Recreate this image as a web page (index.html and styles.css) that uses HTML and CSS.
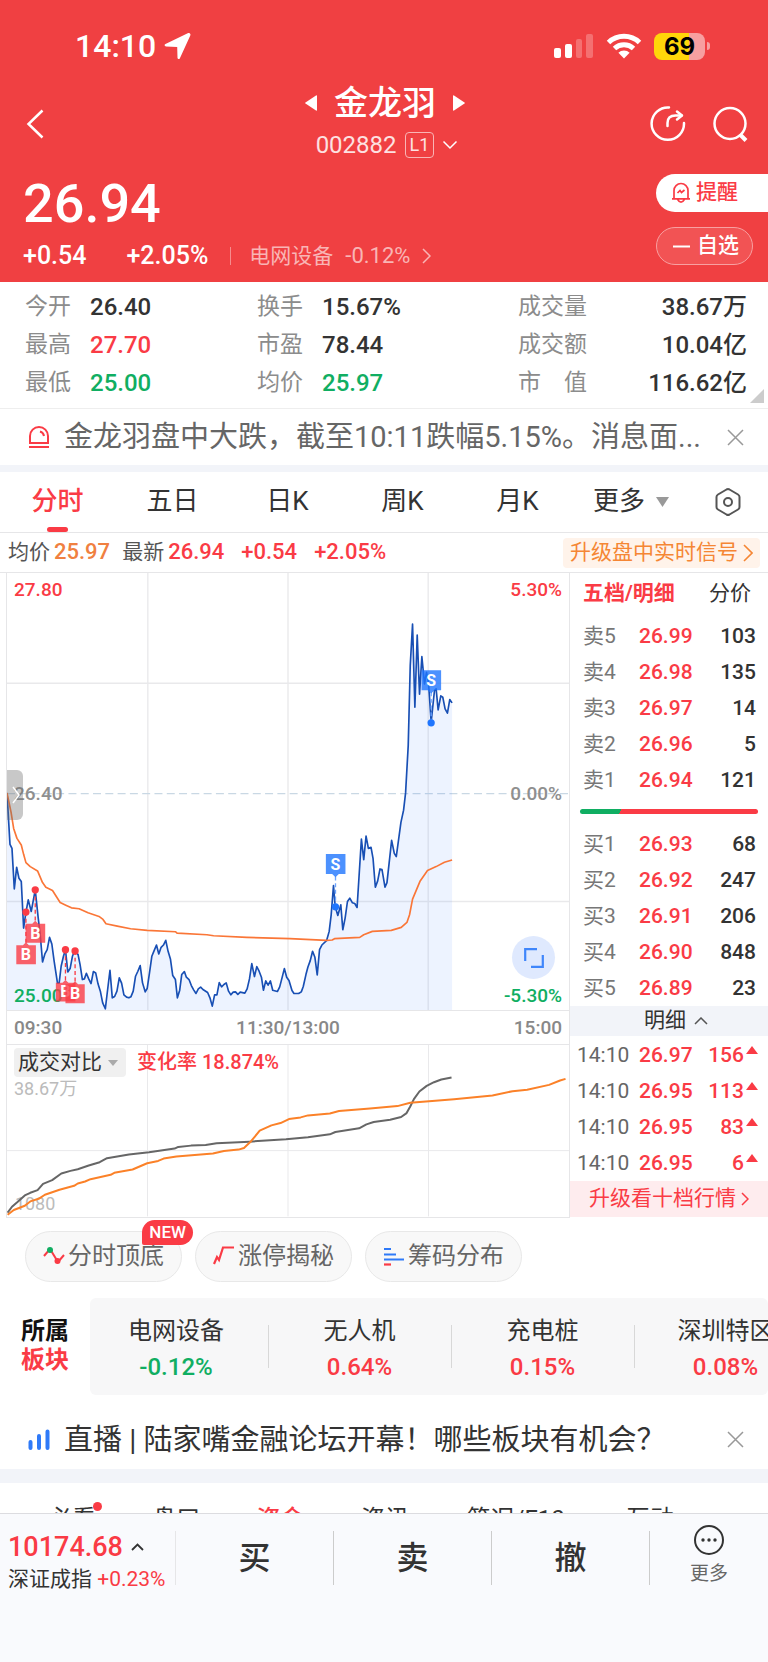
FILE: index.html
```html
<!DOCTYPE html>
<html lang="zh-CN">
<head>
<meta charset="utf-8">
<meta name="viewport" content="width=device-width, initial-scale=1">
<title>金龙羽 002882</title>
<link rel="stylesheet" href="styles.css">
</head>
<body>
<header class="header">
  <div class="status">
    <div class="status-time">14:10
      <svg width="27" height="28" viewBox="0 0 27 28"><path d="M25.6 1.2c.9.4 1.100 1.300.7 2.200L15.900 26.200c-.6 1.400-2.300 1.100-2.400-.4L13.200 14.900 2 14.500c-1.600-.1-1.900-1.800-.5-2.400L23.700 1.200c.7-.3 1.300-.3 1.900 0z" fill="#fff"/></svg>
    </div>
    <div class="status-icons">
      <svg width="40" height="26" viewBox="0 0 40 26" fill="#fff"><rect y="15" width="7" height="10" rx="2"/><rect x="11" y="11" width="7" height="14" rx="2"/><rect x="22" y="6" width="6" height="19" rx="2" opacity=".25"/><rect x="32" y="1" width="7" height="24" rx="2" opacity=".25"/></svg>
      <svg width="36" height="26" viewBox="0 0 36 26"><g fill="none" stroke="#fff" stroke-width="5"><path d="M2.500 9.500a22.500 22.500 0 0 1 31 0"/><path d="M8.500 15.500a14 14 0 0 1 19 0"/></g><path d="M18 25.500l-5.600-5.700a8 8 0 0 1 11.200 0z" fill="#fff"/></svg>
      <span class="battery"><span class="battery-level">69</span></span>
    </div>
  </div>
  <div class="nav">
    <button class="icon-btn nav-back" aria-label="返回"><svg width="18" height="30" viewBox="0 0 18 30"><path d="M16.500 1.500L2.500 15l14 13.500" fill="none" stroke="#fff" stroke-width="2.500"/></svg></button>
    <div class="nav-title">
      <div class="nav-name">
        <button class="icon-btn" aria-label="上一只"><svg width="12" height="16" viewBox="0 0 12 16"><path d="M12 1v14q0 1-1 .5L.5 8.600q-.8-.6 0-1.200L11 .5q1-.5 1 .5z" fill="#fff"/></svg></button>
        <h1>金龙羽</h1>
        <button class="icon-btn" aria-label="下一只"><svg width="12" height="16" viewBox="0 0 12 16"><path d="M0 1v14q0 1 1 .5l10.500-6.900q.8-.6 0-1.200L1 .5Q0 0 0 1z" fill="#fff"/></svg></button>
      </div>
      <div class="nav-code">002882 <span class="level">L1</span>
        <svg width="16" height="10" viewBox="0 0 16 10"><path d="M1.500 1.500L8 8l6.500-6.500" fill="none" stroke="#fff" stroke-width="1.500"/></svg>
      </div>
    </div>
    <div class="nav-actions">
      <button class="icon-btn" aria-label="分享"><svg width="36" height="36" viewBox="0 0 36 36" fill="none" stroke="#fff" stroke-width="2.500" stroke-linecap="round" stroke-linejoin="round"><path d="M19 1.500A16.200 16.200 0 1 0 34 17"/><path d="M17.500 20v-3c0-5 3-7.500 8-7.500h6"/><path d="M27 5.500l5 4-5 4"/></svg></button>
      <button class="icon-btn" aria-label="搜索"><svg width="36" height="36" viewBox="0 0 36 36" fill="none" stroke="#fff" stroke-width="2.500"><circle cx="18" cy="17.500" r="15.500"/><path d="M28 28.500l6 6" stroke-width="4"/></svg></button>
    </div>
  </div>
  <div class="quote">
    <div>
      <div class="quote-price">26.94</div>
      <div class="quote-row">
        <span class="quote-diff">+0.54</span><span class="quote-pct">+2.05%</span>
        <a class="quote-sector" href="#sectors"><span>电网设备</span><span class="quote-sector-pct">-0.12%</span>
          <svg width="9" height="16" viewBox="0 0 9 16"><path d="M1 1l7 7-7 7" fill="none" stroke="currentColor" stroke-width="1.500"/></svg></a>
      </div>
    </div>
    <div class="quote-actions">
      <button class="alert-btn"><svg width="20" height="22" viewBox="0 0 20 22" fill="none" stroke="#fa3b45" stroke-width="1.700"><path d="M1 16.800h18M3 16.500V8.500a7 7 0 0 1 14 0v8M6.500 17.200q3.500 6 7 0"/><path d="M6.500 11l2.500-2.500 1.500 2 3-2.500"/></svg>提醒</button>
      <button class="fav-btn"><svg width="17" height="3" viewBox="0 0 17 3"><path d="M0 1.500h17" stroke="#fff" stroke-width="2"/></svg>自选</button>
    </div>
  </div>
</header>
<main>
  <section class="stats">
    <div class="stat"><span>今开</span><b>26.40</b></div><div class="stat"><span>换手</span><b>15.67%</b></div><div class="stat stat-end"><span>成交量</span><b>38.67万</b></div>
    <div class="stat"><span>最高</span><b class="up">27.70</b></div><div class="stat"><span>市盈</span><b>78.44</b></div><div class="stat stat-end"><span>成交额</span><b>10.04亿</b></div>
    <div class="stat"><span>最低</span><b class="down">25.00</b></div><div class="stat"><span>均价</span><b class="down">25.97</b></div><div class="stat stat-end"><span>市　值</span><b>116.62亿</b></div>
  </section>
  <section class="notice news">
    <svg width="22" height="24" viewBox="0 0 22 24" fill="none" stroke="#fa3b45" stroke-width="2"><path d="M2 18V11a9 9 0 0 1 18 0v7zM1 22h20"/><path d="M12 6.500q3.500 1 4 4.500"/></svg>
    <p>金龙羽盘中大跌，截至10:11跌幅5.15%。消息面...</p>
    <button class="icon-btn" aria-label="关闭"><svg width="17" height="17" viewBox="0 0 17 17"><path d="M1 1l15 15M16 1L1 16" stroke="#999" stroke-width="1.500"/></svg></button>
  </section>
  <nav class="periods">
    <button class="period active">分时</button><button class="period">五日</button><button class="period">日K</button><button class="period">周K</button><button class="period">月K</button>
    <button class="period">更多<svg width="13" height="10" viewBox="0 0 13 10"><path d="M0 0h13L6.500 10z" fill="#999"/></svg></button>
    <button class="period" aria-label="设置"><svg width="26" height="28" viewBox="0 0 26 28" fill="none" stroke="#555" stroke-width="2" stroke-linejoin="round"><path d="M11.500 1.500q1.500-.8 3 0L23 6.500q1.500.9 1.500 2.500v10q0 1.600-1.500 2.500l-8.500 5q-1.500.8-3 0L3 21.500q-1.500-.9-1.500-2.500V9q0-1.600 1.500-2.500z"/><circle cx="13" cy="14" r="4"/></svg></button>
  </nav>
  <div class="summary">
    <span>均价</span><b class="avg">25.97</b><span class="summary-last">最新</span><b class="up">26.94</b><b class="up summary-change">+0.54</b><b class="up summary-change">+2.05%</b>
    <a class="signal" href="#signal">升级盘中实时信号<svg width="10" height="18" viewBox="0 0 10 18"><path d="M1 1l8 8-8 8" fill="none" stroke="currentColor" stroke-width="1.600"/></svg></a>
  </div>
  <section class="board">
    <div class="charts">
      <div class="price-chart">
        <svg class="plot" viewBox="18 21 1692 1317">
          <g stroke="#e9e9eb" stroke-width="4"><path d="M442 21v1317M864 21v1317M1286 21v1317M18 353h1692M18 1010h1692"/></g>
          <path d="M18 685h1692" stroke="#c9d8e4" stroke-width="4" stroke-dasharray="24 13"/>
          <path class="price-area" d="M18 683 27 838 33 850 40 972 47 907 54 940 61 950 68 1090 75 1042 82 1005 91 1040 103 975 112 1060 125 1192 139 1155 146 1118 153 1138 160 1190 170 1256 175 1256 181 1205 194 1155 201 1222 208 1212 222 1158 232 1170 245 1245 251 1243 257 1226 271 1257 278 1221 285 1225 299 1280 314 1333 328 1217 335 1300 349 1280 356 1240 363 1256 370 1291 385 1300 398 1280 405 1235 419 1203 434 1282 440 1272 454 1175 468 1141 475 1168 496 1127 510 1183 517 1233 525 1245 531 1300 544 1230 552 1221 558 1238 566 1245 587 1287 601 1268 622 1284 636 1325 643 1291 650 1291 657 1254 664 1267 678 1255 692 1291 706 1282 734 1286 748 1243 755 1197 763 1236 770 1206 784 1238 790 1277 797 1249 804 1262 811 1249 818 1277 832 1281 839 1267 853 1212 867 1248 882 1287 904 1282 924 1207 938 1160 945 1178 952 1231 959 1155 966 1141 980 1128 988 1100 1001 962 1014 1052 1023 1020 1029 1095 1043 1010 1050 1000 1072 1028 1085 822 1092 884 1099 813 1106 850 1114 847 1127 967 1141 912 1156 967 1176 826 1190 875 1204 772 1218 683 1232 300 1239 175 1246 425 1253 208 1260 386 1267 273 1275 355 1287 340 1295 470 1310 370 1316 433 1324 391 1337 430 1344 443 1351 402 1358 412V1338H18z"/>
          <polyline class="price-line" points="18,683 27,838 33,850 40,972 47,907 54,940 61,950 68,1090 75,1042 82,1005 91,1040 103,975 112,1060 118,1110 125,1192 132,1168 139,1155 146,1118 153,1138 160,1190 170,1256 175,1256 181,1205 188,1175 194,1155 201,1222 208,1212 215,1175 222,1158 232,1170 238,1200 245,1245 251,1243 257,1226 264,1243 271,1257 278,1221 285,1225 292,1258 299,1280 306,1315 314,1333 321,1275 328,1217 335,1300 342,1296 349,1280 356,1240 363,1256 370,1291 378,1298 385,1300 391,1297 398,1280 405,1235 412,1220 419,1203 426,1255 434,1282 440,1272 447,1225 454,1175 461,1158 468,1141 475,1168 482,1148 489,1141 496,1127 503,1160 510,1183 517,1233 525,1245 531,1300 538,1277 544,1230 552,1221 558,1238 566,1245 573,1263 580,1276 587,1287 594,1273 601,1268 608,1275 622,1284 629,1300 636,1325 643,1291 650,1291 657,1254 664,1267 671,1260 678,1255 685,1280 692,1291 699,1283 706,1282 713,1290 720,1283 734,1286 741,1273 748,1243 755,1197 763,1236 770,1206 777,1220 784,1238 790,1277 797,1249 804,1262 811,1249 818,1277 832,1281 839,1267 846,1240 853,1212 860,1238 867,1248 876,1278 882,1287 896,1287 904,1282 910,1266 918,1230 924,1207 931,1188 938,1160 945,1178 952,1231 959,1155 966,1141 980,1128 988,1100 994,1050 1001,962 1006,1025 1014,1052 1023,1020 1029,1095 1036,1060 1043,1010 1050,1000 1058,1014 1065,1016 1072,1028 1085,822 1092,884 1099,813 1106,850 1114,847 1120,880 1127,967 1134,948 1141,912 1147,914 1156,967 1162,953 1176,826 1184,865 1190,875 1204,772 1212,735 1218,683 1226,540 1232,300 1239,175 1246,425 1253,208 1260,386 1267,273 1275,355 1281,320 1287,350 1295,470 1305,375 1310,370 1316,433 1324,391 1330,395 1337,430 1344,443 1351,402 1358,412"/>
          <polyline class="avg-line" points="18,683 30,740 38,790 48,820 61,840 68,868 75,893 88,905 110,918 125,953 135,967 155,977 178,1013 195,1021 212,1029 235,1032 262,1044 295,1055 307,1064 316,1077 350,1084 390,1092 440,1097 525,1101 530,1105 620,1110 640,1113 740,1118 870,1122 980,1127 997,1126 1004,1122 1080,1118 1092,1110 1118,1100 1175,1097 1205,1088 1222,1073 1230,1050 1239,1003 1262,948 1284,917 1310,905 1335,892 1358,885"/>
        </svg>
        <span class="tag tag-tl up">27.80</span><span class="tag tag-tr up">5.30%</span>
        <span class="tag tag-ml">26.40</span><span class="tag tag-mr">0.00%</span>
        <span class="tag tag-bl down">25.00</span><span class="tag tag-br down">-5.30%</span>
        <svg class="plot markers" viewBox="18 21 1692 1317">
          <g class="buy"><path class="stem" d="M75 1042v100M103 975v100M194 1155v100M223 1159v100"/>
            <path class="flag" d="M46 1142h20l9-9 9 9h21v57H46zM74 1077h20l9-9 9 9h21v57H74zM165 1255h20l9-9 9 9h21v56H165z"/>
            <text class="letter" x="194" y="1299">B</text>
            <path class="flag" d="M194 1259h20l9-9 9 9h20v57H194z"/>
            <circle cx="75" cy="1042" r="11"/><circle cx="103" cy="975" r="11"/><circle cx="194" cy="1155" r="11"/><circle cx="223" cy="1159" r="11"/>
            <g class="letter"><text x="75" y="1187">B</text><text x="103" y="1122">B</text><text x="223" y="1304">B</text></g></g>
          <g class="sell"><path class="stem" d="M1007 935v90M1295 380v90"/>
            <path class="flag" d="M978 867h59v60h-20l-10 10-10-10h-19zM1266 314h59v60h-20l-10 10-10-10h-19z"/>
            <circle cx="1007" cy="1026" r="11"/><circle cx="1295" cy="472" r="11"/>
            <g class="letter"><text x="1007" y="914">S</text><text x="1295" y="361">S</text></g></g>
        </svg>
        <button class="drawer" aria-label="展开"><svg width="8" height="18" viewBox="0 0 8 18"><path d="M1 1l6 8-6 8" fill="none" stroke="#fff" stroke-width="1.500"/></svg></button>
        <button class="expand" aria-label="全屏"><svg width="20" height="20" viewBox="0 0 20 20"><path d="M1.200 13V1.200H13M7 18.800h11.800V7" fill="none" stroke="#3f86fb" stroke-width="2.200"/></svg></button>
      </div>
      <div class="axis"><span>09:30</span><span>11:30/13:00</span><span>15:00</span></div>
      <div class="volume-chart">
        <svg class="plot" viewBox="0 0 564 172">
          <path d="M141 0v172M282 0v172M423 0v172M0 106h564" stroke="#e9e9eb" stroke-width="1"/>
          <g transform="scale(.3667 .3333) translate(-16.400 -135)" fill="none" stroke-width="2" stroke-linejoin="round">
            <text class="plot-note" transform="translate(38 632) scale(2.727 3)">1080</text>
            <polyline vector-effect="non-scaling-stroke" stroke="#666" points="18,640 30,622 45,608 65,588 80,580 100,572 115,553 140,542 165,522 190,514 210,509 240,498 270,488 290,476 350,465 405,458 475,447 485,442 520,438 560,436 590,431 680,426 780,419 840,413 900,404 915,397 980,386 1000,374 1020,367 1065,360 1095,352 1110,340 1120,320 1130,298 1145,275 1165,258 1185,247 1205,239 1233,233"/>
            <polyline vector-effect="non-scaling-stroke" stroke="#fb8128" points="18,646 35,632 65,619 80,606 105,597 120,586 160,571 200,559 210,552 230,546 245,539 300,526 310,520 360,510 400,491 430,484 445,477 480,471 580,462 610,454 650,450 665,445 685,424 708,393 740,377 765,370 788,358 820,353 840,347 900,341 925,334 1010,326 1085,319 1120,309 1240,298 1345,287 1400,274 1440,270 1500,255 1530,242 1545,237"/>
          </g>
        </svg>
        <div class="volume-head">
          <select class="indicator" aria-label="指标"><option>成交对比</option></select>
          <svg class="indicator-caret" width="10" height="6" viewBox="0 0 10 6"><path d="M0 0h10L5 6z" fill="#aaa"/></svg>
          <span class="up">变化率 18.874%</span>
          <span class="volume-max">38.67万</span>
        </div>
      </div>
    </div>
    <aside class="depth">
      <div class="depth-tabs"><button class="depth-tab active">五档/明细</button><button class="depth-tab">分价</button></div>
      <table class="levels">
        <tr><th>卖5</th><td>26.99</td><td>103</td></tr>
        <tr><th>卖4</th><td>26.98</td><td>135</td></tr>
        <tr><th>卖3</th><td>26.97</td><td>14</td></tr>
        <tr><th>卖2</th><td>26.96</td><td>5</td></tr>
        <tr><th>卖1</th><td>26.94</td><td>121</td></tr>
      </table>
      <div class="ratio"></div>
      <table class="levels">
        <tr><th>买1</th><td>26.93</td><td>68</td></tr>
        <tr><th>买2</th><td>26.92</td><td>247</td></tr>
        <tr><th>买3</th><td>26.91</td><td>206</td></tr>
        <tr><th>买4</th><td>26.90</td><td>848</td></tr>
        <tr><th>买5</th><td>26.89</td><td>23</td></tr>
      </table>
      <button class="ticks-head">明细<svg width="14" height="8" viewBox="0 0 14 8"><path d="M1 7l6-6 6 6" fill="none" stroke="#555" stroke-width="1.500"/></svg></button>
      <table class="levels ticks">
        <tr><th>14:10</th><td>26.97</td><td>156<i class="rise"></i></td></tr>
        <tr><th>14:10</th><td>26.95</td><td>113<i class="rise"></i></td></tr>
        <tr><th>14:10</th><td>26.95</td><td>83<i class="rise"></i></td></tr>
        <tr><th>14:10</th><td>26.95</td><td>6<i class="rise"></i></td></tr>
      </table>
      <a class="upgrade" href="#level2">升级看十档行情<svg width="8" height="14" viewBox="0 0 8 14"><path d="M1 1l6 6-6 6" fill="none" stroke="currentColor" stroke-width="1.500"/></svg></a>
    </aside>
  </section>
  <div class="tools">
    <button class="tool"><svg width="22" height="20" viewBox="0 0 22 20"><path d="M1 10l6-7 8 13 6-7" fill="none" stroke="#fa3b45" stroke-width="2"/><circle cx="7" cy="4" r="3" fill="#10ae62"/><circle cx="14.500" cy="15" r="3" fill="#fa3b45"/></svg>分时顶底<span class="badge">NEW</span></button>
    <button class="tool"><svg width="22" height="20" viewBox="0 0 22 20"><path d="M1 18l3-7 2 3 4-12.500h11" fill="none" stroke="#fa3b45" stroke-width="2.200"/></svg>涨停揭秘</button>
    <button class="tool"><svg width="22" height="20" viewBox="0 0 22 20" stroke-width="2.200"><path d="M1 3h7M1 8.500h12M1 13.500h20" stroke="#2f7af8"/><path d="M1 18.500h7" stroke="#fa3b45"/></svg>筹码分布</button>
  </div>
  <section class="sectors" id="sectors">
    <h2>所属<br><span class="up">板块</span></h2>
    <div class="sector-list">
      <a class="sector" href="#s1"><span>电网设备</span><b class="down">-0.12%</b></a>
      <a class="sector" href="#s2"><span>无人机</span><b class="up">0.64%</b></a>
      <a class="sector" href="#s3"><span>充电桩</span><b class="up">0.15%</b></a>
      <a class="sector" href="#s4"><span>深圳特区</span><b class="up">0.08%</b></a>
    </div>
  </section>
  <section class="notice live">
    <svg width="22" height="22" viewBox="0 0 22 22" stroke="#2f7af8" stroke-width="4" stroke-linecap="round"><path d="M2.500 13v6M11 7v12M19.500 2.500V19"/></svg>
    <p>直播 | 陆家嘴金融论坛开幕！哪些板块有机会？</p>
    <button class="icon-btn" aria-label="关闭"><svg width="17" height="17" viewBox="0 0 17 17"><path d="M1 1l15 15M16 1L1 16" stroke="#999" stroke-width="1.500"/></svg></button>
  </section>
  <nav class="sections">
    <a class="section-link" href="#a"><span class="has-dot">必看</span></a><a class="section-link" href="#b">盘口</a><a class="section-link active" href="#c">资金</a><a class="section-link" href="#d">资讯</a><a class="section-link" href="#e">简况/F10</a><a class="section-link" href="#f">互动</a>
  </nav>
</main>
<footer class="trade">
  <a class="index" href="#index">
    <b class="index-value">10174.68<svg width="13" height="8" viewBox="0 0 13 8"><path d="M1 7l5.500-5.500L12 7" fill="none" stroke="#333" stroke-width="1.800"/></svg></b>
    <span>深证成指 <span class="up">+0.23%</span></span>
  </a>
  <button class="trade-btn">买</button><button class="trade-btn">卖</button><button class="trade-btn">撤</button>
  <button class="more-btn"><svg width="32" height="32" viewBox="0 0 32 32"><circle cx="16" cy="16" r="14" fill="none" stroke="#333" stroke-width="2"/><g fill="#333"><circle cx="10" cy="16" r="1.700"/><circle cx="16" cy="16" r="1.700"/><circle cx="22" cy="16" r="1.700"/></g></svg>更多</button>
</footer>
</body>
</html>
```
FILE: styles.css
```css
* { box-sizing: border-box; }
body { margin: 0; background: #fff; color: #333; font: 400 24px/1.2 Roboto, "Noto Sans CJK SC", sans-serif; }
button, select { margin: 0; padding: 0; border: 0; background: none; color: inherit; font: inherit; cursor: pointer; }
a { color: inherit; text-decoration: none; }
b { font-weight: 500; }
h1, h2, p { margin: 0; }
svg { display: block; flex: none; }
.up { color: #fa3b45; }
.down { color: #10ae62; }
.avg { color: #f08040; }
.icon-btn { display: flex; flex: none; }

.header { background: #f04042; color: #fff; }
.status { display: flex; justify-content: space-between; align-items: center; height: 62px; padding: 30px 58px 0 75px; }
.status-time { display: flex; align-items: center; gap: 8px; font-size: 32px; line-height: 32px; font-weight: 500; }
.status-icons { display: flex; align-items: center; gap: 12px; }
.battery { display: flex; align-items: center; gap: 2px; }
.battery-level { width: 51px; border-radius: 8px; background: linear-gradient(90deg, #ffd60a 69%, #f79fa0 69%); color: #000; font: 700 24px/27px Inter, sans-serif; text-align: center; }
.battery::after { content: ""; width: 3px; height: 8px; border-radius: 0 3px 3px 0; background: #f79fa0; }
.nav { display: grid; grid-template-columns: 1fr auto 1fr; align-items: center; height: 84px; margin-top: 20px; padding: 0 20px 0 22px; }
.nav-back { justify-self: start; padding-left: 4px; }
.nav-title { align-self: start; }
.nav-name { display: flex; align-items: center; justify-content: center; gap: 17px; }
.nav-name h1 { font-size: 34px; line-height: 42px; font-weight: 500; }
.nav-code { display: flex; align-items: center; justify-content: center; gap: 8px; margin-top: 6px; padding-left: 4px; font-size: 24px; line-height: 30px; color: #fde1e1; }
.level { padding: 0 4px; border: 1px solid #f9b5b5; border-radius: 4px; font-size: 18px; line-height: 24px; }
.nav-actions { display: flex; justify-self: end; gap: 26px; }
.quote { display: flex; justify-content: space-between; padding: 8px 0 13px 23px; }
.quote-price { font-size: 54px; line-height: 60px; font-weight: 500; }
.quote-row { display: flex; align-items: center; margin-top: 9px; font-size: 25px; line-height: 26px; font-weight: 500; }
.quote-pct { margin-left: 40px; }
.quote-sector { display: flex; align-items: center; gap: 12px; margin-left: 22px; padding-left: 18px; color: #f9b5b5; font-size: 21px; line-height: 18px; font-weight: 400; border-left: 1px solid #f68c8d; }
.quote-sector-pct { font-size: 22px; }
.quote-actions { display: flex; flex-direction: column; gap: 15px; width: 112px; }
.alert-btn, .fav-btn { display: flex; align-items: center; height: 38px; font-size: 21px; }
.alert-btn { gap: 5px; padding-left: 15px; border-radius: 19px 0 0 19px; background: #fff; color: #fa3b45; font-weight: 500; }
.fav-btn { gap: 7px; width: 97px; padding-left: 16px; border: 1px solid #f8a0a1; border-radius: 19px; background: #f25354; font-weight: 500; }

.stats { display: grid; grid-template-columns: 232fr 261fr 229fr; padding: 6px 21px 6px 25px; border-bottom: 1px solid #eee; position: relative; }
.stats::after { content: ""; position: absolute; right: 4px; bottom: 5px; border: 7px solid transparent; border-right-color: #ccc; border-bottom-color: #ccc; }
.stat { display: flex; gap: 19px; line-height: 38px; }
.stat span { font-size: 23px; color: #8c8c8c; }
.stat-end { justify-content: space-between; }
.notice { display: flex; align-items: center; gap: 14px; padding: 0 24px 0 28px; background: #fff; }
.notice p { flex: 1; min-width: 0; overflow: hidden; white-space: nowrap; font-size: 29px; line-height: 40px; }
.news { height: 56px; color: #666; }
.live { height: 74px; padding-top: 16px; }

.periods { display: grid; grid-template-columns: repeat(5, 115fr) 112fr 81fr; height: 68px; border-top: 7px solid #f2f4f9; border-bottom: 1px solid #e6e6e8; }
.period { position: relative; display: flex; align-items: center; justify-content: center; gap: 11px; font-size: 26px; }
.period.active { color: #fa3b45; font-weight: 500; }
.period.active::after { content: ""; position: absolute; bottom: 0; width: 21px; height: 5px; border-radius: 3px; background: #fa3b45; }
.summary { display: flex; align-items: center; height: 39px; padding: 0 8px; font-size: 21px; color: #555; }
.summary b { margin-left: 4px; font-size: 22px; }
.summary .summary-last { margin-left: 12px; }
.summary .summary-change { margin-left: 17px; }
.signal { display: flex; align-items: center; gap: 5px; height: 30px; margin-left: auto; padding: 0 7px; border-radius: 4px; background: #fff3ea; color: #f58634; }

.board { display: grid; grid-template-columns: 570fr 198fr; border-top: 1px solid #e6e6e8; }
.charts { margin-left: 6px; border: solid #e6e6e8; border-width: 0 1px 1px; }
.plot { width: 100%; height: auto; }
.price-chart, .volume-chart { position: relative; }
.price-area { fill: #3c78ff; fill-opacity: .09; }
.price-line, .avg-line { fill: none; stroke-width: 5; stroke-linejoin: round; }
.price-line { stroke: #184fb4; }
.avg-line { stroke: #fa7637; }
.tag { position: absolute; font-size: 19px; line-height: 22px; font-weight: 500; }
.tag-tl, .tag-bl, .tag-ml { left: 7px; }
.tag-tr, .tag-br, .tag-mr { right: 7px; }
.tag-tl, .tag-tr { top: 6px; }
.tag-ml, .tag-mr { top: 48%; color: #8f8f8f; }
.tag-bl, .tag-br { bottom: 3px; }
.markers { position: absolute; top: 0; left: 0; }
.stem { fill: none; stroke-width: 4; stroke-dasharray: 12 8; }
.buy .stem { stroke: #fa3b45; }
.buy { fill: #fa3b45; }
.sell { fill: #1f75fe; }
.sell .stem { stroke: #6ba3ff; }
.flag { fill-opacity: .8; }
.letter { fill: #fff; font: 700 48px Roboto, sans-serif; text-anchor: middle; }
.drawer { position: absolute; left: 0; top: 45%; display: flex; align-items: center; width: 16px; height: 50px; padding-left: 5px; border-radius: 0 6px 6px 0; background: rgba(110, 110, 110, .38); }
.expand { position: absolute; right: 14px; bottom: 31px; display: grid; place-items: center; width: 43px; height: 43px; border-radius: 50%; background: #dfe9fe; }
.axis { display: grid; grid-template-columns: 1fr auto 1fr; height: 35px; padding: 0 7px; border: solid #e6e6e8; border-width: 1px 0; color: #888; font-size: 19px; line-height: 34px; font-weight: 500; }
.axis span:last-child { text-align: right; }
.plot-note { fill: #bbb; font-size: 18px; }
.volume-head { position: absolute; top: 3px; left: 7px; display: grid; grid-template-columns: 112px auto; column-gap: 11px; align-items: center; font-size: 20px; line-height: 29px; font-weight: 500; }
.indicator { grid-area: 1 / 1; appearance: none; height: 29px; padding: 0 4px; border-radius: 4px; background: #f0f0f0; font-size: 21px; font-weight: 400; }
.indicator-caret { grid-area: 1 / 1; justify-self: end; margin-right: 8px; }
.volume-max { grid-row: 2; color: #bbb; font-size: 18px; line-height: 24px; font-weight: 400; }

.depth-tabs { display: flex; justify-content: space-between; align-items: center; height: 42px; margin-bottom: 3px; padding: 0 17px 0 13px; font-size: 21px; }
.depth-tab.active { color: #fa3b45; font-weight: 700; }
.levels { width: 100%; border-collapse: collapse; table-layout: fixed; font-size: 21px; line-height: 36px; }
.levels th, .levels td { padding: 0; text-align: left; font-weight: 500; }
.levels th { width: 69px; padding-left: 13px; color: #777; font-weight: 400; }
.levels td { color: #fa3b45; }
.levels td:last-child { padding-right: 12px; text-align: right; color: #333; }
.levels.ticks th { padding-left: 7px; color: #666; }
.levels.ticks td:last-child { padding-right: 10px; color: #fa3b45; }
.rise { display: inline-block; margin: 0 0 8px 2px; border: solid transparent; border-width: 0 6px 8px; border-bottom-color: #fa3b45; }
.ratio { height: 5px; margin: 11px 10px 12px; border-radius: 3px; background: linear-gradient(120deg, #10ae62 23%, #fa3b45 23%); }
.ticks-head, .upgrade { display: flex; align-items: center; justify-content: center; gap: 8px; width: 100%; font-size: 21px; }
.ticks-head { height: 30px; margin-bottom: 1px; padding-left: 14px; background: #f2f4f9; }
.upgrade { height: 36px; gap: 5px; background: #feecee; color: #fa3b45; }

.tools { display: flex; gap: 13px; padding: 13px 25px 16px; }
.tool { position: relative; display: flex; align-items: center; gap: 3px; height: 51px; padding: 0 17px; border: 1px solid #e8e8e8; border-radius: 26px; background: #f8f8f8; color: #666; }
.badge { position: absolute; top: -12px; right: -12px; padding: 0 7px; border-radius: 13px 13px 13px 2px; background: #fa3b45; color: #fff; font-size: 17px; line-height: 25px; font-weight: 500; }
.sectors { display: flex; align-items: center; overflow: hidden; }
.sectors h2 { width: 90px; flex: none; padding-left: 21px; color: #111; font-size: 24px; line-height: 29px; font-weight: 700; }
.sector-list { display: flex; flex: 1; padding-right: 10px; border-radius: 6px; background: #f7f7f8; min-width: 0; }
.sector { display: flex; flex: 0 0 183px; flex-direction: column; align-items: center; height: 97px; padding-top: 15px; line-height: 36px; white-space: nowrap; }
.sector:first-child { flex-basis: 178px; padding-right: 6px; }
.sector + .sector { background: linear-gradient(#d8d8d8, #d8d8d8) 0 center / 1px 43px no-repeat; }
.sections { display: grid; grid-template-columns: 104fr 104fr 104fr 105fr 156fr 112fr; height: 44px; padding: 18px 62px 0 20px; overflow: hidden; border-top: 14px solid #f2f4f9; line-height: 36px; text-align: center; }
.section-link.active { color: #fa3b45; font-weight: 500; }
.has-dot { position: relative; }
.has-dot::after { content: ""; position: absolute; top: -3px; right: -6px; width: 9px; height: 9px; border-radius: 50%; background: #fa3b45; }

.trade { display: grid; grid-template-columns: 176fr 158fr 158fr 158fr 118fr; align-items: start; height: 149px; padding-top: 17px; border-top: 1px solid #dcdce0; background: #f9fafd; }
.index { display: flex; flex-direction: column; height: 54px; padding-left: 8px; border-right: 1px solid #e6e6e8; font-size: 21px; line-height: 32px; white-space: nowrap; }
.index-value { display: flex; align-items: center; gap: 8px; color: #fa3b45; font-size: 27px; line-height: 32px; }
.trade-btn { height: 54px; border-right: 1px solid #ccc; font-size: 32px; font-weight: 500; line-height: 54px; }
.more-btn { display: flex; flex-direction: column; align-items: center; gap: 6px; margin-top: -7px; color: #666; font-size: 19px; line-height: 24px; }
```
